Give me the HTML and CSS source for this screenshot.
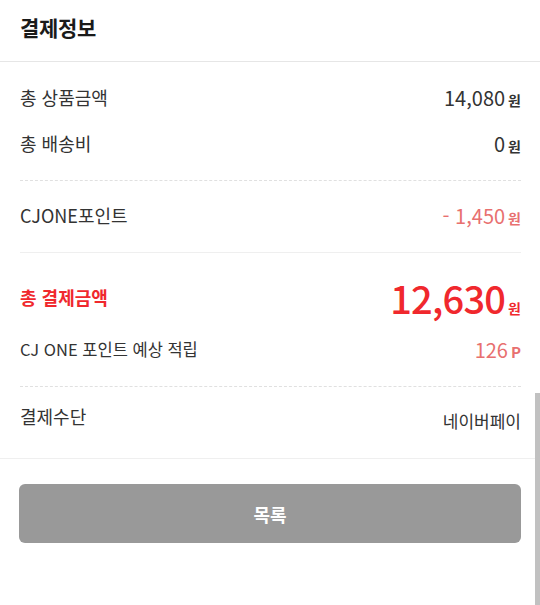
FILE: index.html
```html
<!DOCTYPE html>
<html lang="ko">
<head>
<meta charset="utf-8">
<link rel="stylesheet" href="styles.css">
</head>
<body>
<div class="page">
  <header class="head"><h1 class="title">결제정보</h1></header>
  <section class="block block-goods">
    <div class="row"><span class="label">총 상품금액</span><span class="value"><span class="num">14,080</span><span class="unit">원</span></span></div>
    <div class="row"><span class="label">총 배송비</span><span class="value"><span class="num">0</span><span class="unit">원</span></span></div>
  </section>
  <section class="block block-point">
    <div class="row"><span class="label">CJONE포인트</span><span class="value pink"><span class="num">- 1,450</span><span class="unit">원</span></span></div>
  </section>
  <section class="block block-total">
    <div class="row row-total"><span class="label label-total">총 결제금액</span><span class="value red"><span class="num num-big">12,630</span><span class="unit">원</span></span></div>
    <div class="row row-reward"><span class="label label-small">CJ ONE 포인트 예상 적립</span><span class="value pink"><span class="num">126</span><span class="unit unit-p">P</span></span></div>
  </section>
  <section class="block-pay">
    <div class="row row-pay"><span class="label pay-label">결제수단</span><span class="pay">네이버페이</span></div>
  </section>
  <div class="actions"><button class="btn">목록</button></div>
  <div class="scrollbar"></div>
</div>
</body>
</html>
```
FILE: styles.css
```css
* { box-sizing: border-box; }
html, body { margin: 0; padding: 0; background: #fff; }
body {
  font-family: "Noto Sans CJK KR", "Noto Sans", sans-serif;
  color: #333;
  width: 540px;
  height: 605px;
  overflow: hidden;
}
.page { position: relative; height: 605px; }
.head {
  height: 62px;
  border-bottom: 1px solid #e6e6e6;
  padding: 0 20px;
  display: flex;
  align-items: center;
}
.title {
  margin: 0 0 8px;
  font-size: 21px;
  font-weight: 700;
  color: #1a1a1a;
  letter-spacing: -0.3px;
}
.block { margin: 0 19px 0 20px; }
.block-goods { padding: 12px 0 14px; border-bottom: 1px dashed #e0e0e0; }
.block-point { padding: 11px 0 14px; border-bottom: 1px solid #efefef; }
.block-total { padding: 16px 0 13px; border-bottom: 1px dashed #e0e0e0; }
.block-pay { padding: 0 19px 0 20px; border-bottom: 1px solid #efefef; }
.row {
  height: 46px;
  display: flex;
  align-items: center;
  justify-content: space-between;
}
.row-total { height: 56px; }
.row-reward { height: 48px; }
.label { font-size: 18px; line-height: 24px; color: #333; }
.label-small { font-size: 16.5px; }
.label-total { font-weight: 700; color: #f0282d; font-size: 18px; }
.value { display: flex; align-items: baseline; color: #333; }
.num { font-size: 20px; }
.num-big { font-size: 38px; font-weight: 500; letter-spacing: -0.8px; }
.unit { font-size: 14px; font-weight: 700; margin-left: 3px; }
.unit-p { font-size: 15px; margin-left: 3px; }
.pink { color: #e8706f; }
.red { color: #f0282d; }
.row-pay { height: 71px; align-items: flex-start; }
.pay-label { margin-top: 17px; }
.pay { font-size: 17px; line-height: 24px; color: #333; margin-top: 22px; }
.actions { padding: 25px 19px 0 19px; }
.btn {
  width: 100%;
  height: 59px;
  border: 0;
  border-radius: 6px;
  background: #999;
  color: #fff;
  font-family: inherit;
  font-size: 18px;
  font-weight: 700;
}
.scrollbar {
  position: absolute;
  right: 0;
  top: 393px;
  width: 5px;
  height: 212px;
  background: #c1c1c1;
}
```
